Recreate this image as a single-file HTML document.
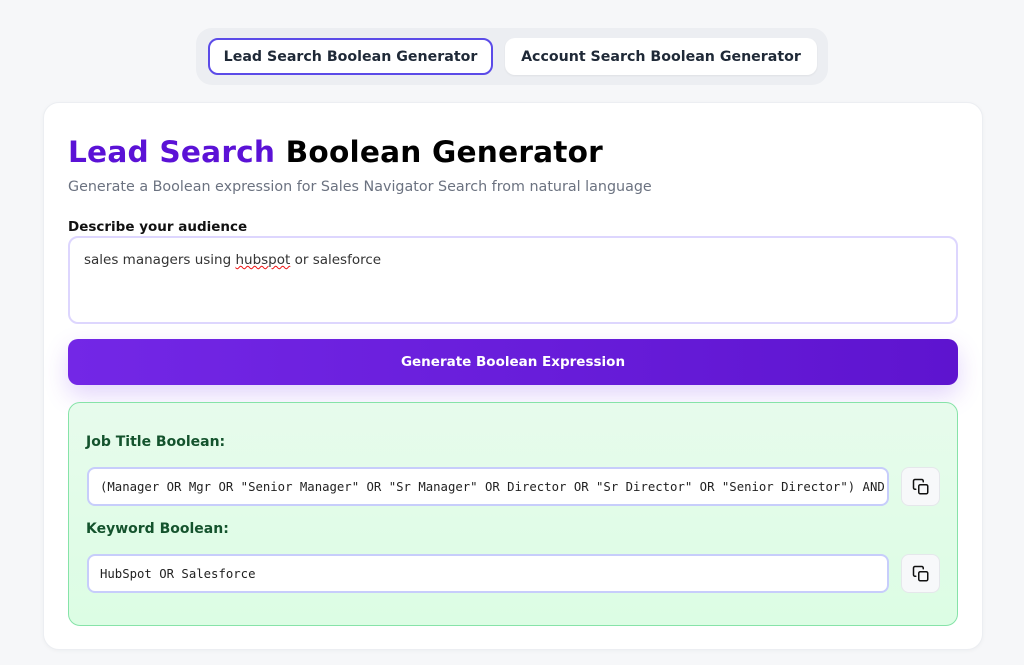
<!DOCTYPE html>
<html><head><meta charset="utf-8"><style>
*{box-sizing:border-box;margin:0;padding:0}
body{width:1024px;height:665px;background:#f6f7f9;font-family:"DejaVu Sans","Liberation Sans",sans-serif;position:relative;overflow:hidden}
.tabs{position:absolute;left:196px;top:28px;width:632px;height:57px;background:#eceef2;border-radius:16px}
.tab{position:absolute;top:10px;height:37px;background:#fff;border-radius:10px;font-size:14.2px;font-weight:bold;color:#1f2937;display:flex;align-items:center;justify-content:center}
.t1{left:12px;width:285px;border:2px solid #5b4be8}
.t2{left:309px;width:312px;box-shadow:0 1px 2px rgba(0,0,0,.06)}
.card{position:absolute;left:43px;top:102px;width:940px;height:548px;background:#fff;border-radius:16px;border:1px solid #eceef2;box-shadow:0 1px 4px rgba(0,0,0,.04)}
h1{position:absolute;left:68px;top:135px;font-size:29.6px;font-weight:bold;color:#000;letter-spacing:.2px}
h1 span{color:#5b12d6}
.sub{position:absolute;left:68px;top:179px;font-size:14.3px;color:#6b7280}
.lbl{position:absolute;left:68px;top:219px;font-size:13.5px;font-weight:bold;color:#111}
.ta{position:absolute;left:68px;top:236px;width:890px;height:88px;border:2px solid #ddd6fe;border-radius:10px;padding:14px 14px;font-size:13.5px;color:#333}
.ta u{text-decoration:underline wavy #e11;text-decoration-thickness:1px}
.btn{position:absolute;left:68px;top:339px;width:890px;height:46px;border-radius:10px;background:linear-gradient(90deg,#7327e6,#5e14cf);color:#fff;font-size:13.5px;font-weight:bold;display:flex;align-items:center;justify-content:center;box-shadow:0 10px 24px rgba(124,58,237,.22)}
.res{position:absolute;left:68px;top:402px;width:890px;height:224px;border:1px solid #86e3a8;border-radius:12px;background:linear-gradient(180deg,#e7fbec,#dcfde4)}
.rl{position:absolute;left:86px;font-size:14px;font-weight:bold;color:#14532d}
.in{position:absolute;left:87px;width:802px;height:39px;background:#fff;border:2px solid #c7cdfb;border-radius:8px;font-family:"DejaVu Sans Mono","Liberation Mono",monospace;font-size:12.3px;color:#222;padding:0 11px;display:flex;align-items:center;white-space:nowrap;overflow:hidden}
.cp{position:absolute;left:901px;width:39px;height:39px;background:#f7f8fa;border:1px solid #e5e7eb;border-radius:8px;display:flex;align-items:center;justify-content:center}
</style></head><body>
<div class="tabs"><div class="tab t1">Lead Search Boolean Generator</div><div class="tab t2">Account Search Boolean Generator</div></div>
<div class="card"></div>
<h1><span>Lead Search</span> Boolean Generator</h1>
<div class="sub">Generate a Boolean expression for Sales Navigator Search from natural language</div>
<div class="lbl">Describe your audience</div>
<div class="ta">sales managers using <u>hubspot</u> or salesforce</div>
<div class="btn">Generate Boolean Expression</div>
<div class="res"></div>
<div class="rl" style="top:434px">Job Title Boolean:</div>
<div class="in" style="top:467px">(Manager OR Mgr OR "Senior Manager" OR "Sr Manager" OR Director OR "Sr Director" OR "Senior Director") AND</div>
<div class="cp" style="top:467px"><svg width="18" height="18" viewBox="0 0 24 24" fill="none" stroke="#111" stroke-width="2" stroke-linecap="round" stroke-linejoin="round"><rect x="9" y="9" width="12" height="12" rx="2"/><path d="M5 15H4a2 2 0 0 1-2-2V4a2 2 0 0 1 2-2h9a2 2 0 0 1 2 2v1"/></svg></div>
<div class="rl" style="top:521px">Keyword Boolean:</div>
<div class="in" style="top:554px">HubSpot OR Salesforce</div>
<div class="cp" style="top:554px"><svg width="18" height="18" viewBox="0 0 24 24" fill="none" stroke="#111" stroke-width="2" stroke-linecap="round" stroke-linejoin="round"><rect x="9" y="9" width="12" height="12" rx="2"/><path d="M5 15H4a2 2 0 0 1-2-2V4a2 2 0 0 1 2-2h9a2 2 0 0 1 2 2v1"/></svg></div>
</body></html>
